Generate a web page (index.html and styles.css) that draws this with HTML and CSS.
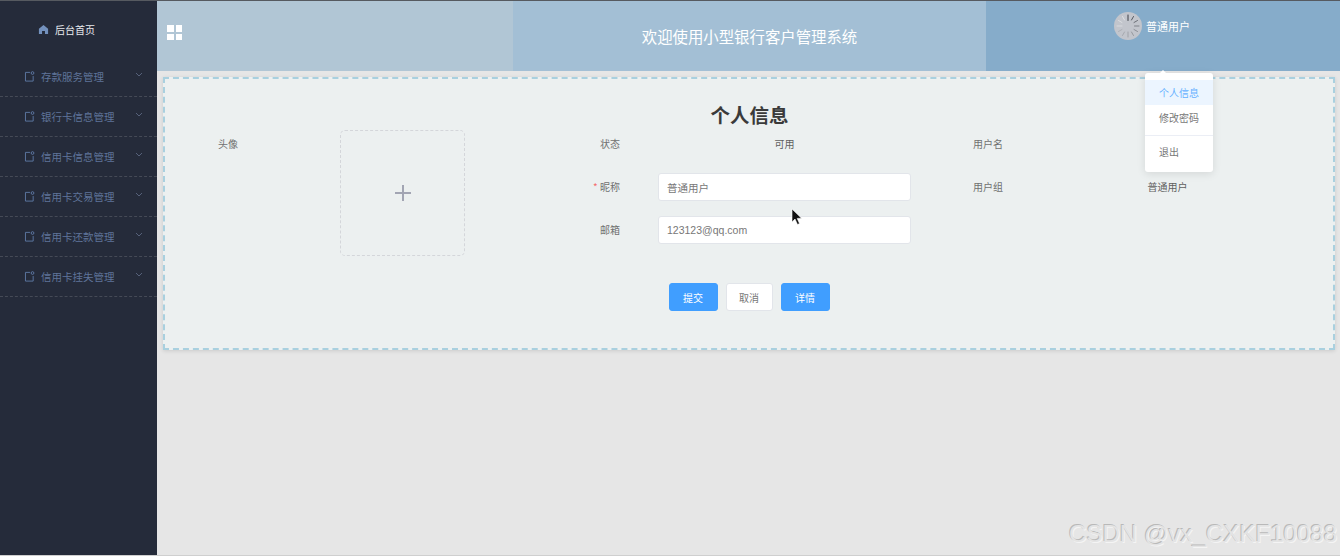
FILE: index.html
```html
<!DOCTYPE html>
<html>
<head>
    <title>个人信息</title>
    <link rel="stylesheet" href="styles.css">
</head>
<body>
    <div class="app">
        <aside class="sidebar">
            <div class="side-home">
                <svg class="home-icon" viewBox="0 0 12 12"><path d="M6 1 L11 5.2 V11 H7.6 V7.6 H4.4 V11 H1 V5.2 Z"/></svg>
                <span>后台首页</span>
            </div>
            <ul class="side-menu">
                <li class="side-item">
                    <svg class="item-icon" viewBox="0 0 12 12"><path d="M6.5 1.5 H1.6 V11 H10 V5.5"/><circle cx="9.3" cy="2.2" r="1.5"/></svg>
                    <span class="item-text">存款服务管理</span>
                    <svg class="item-arrow" viewBox="0 0 8 5"><path d="M1 1 L4 4 L7 1"/></svg>
                </li>
                <li class="side-item">
                    <svg class="item-icon" viewBox="0 0 12 12"><path d="M6.5 1.5 H1.6 V11 H10 V5.5"/><circle cx="9.3" cy="2.2" r="1.5"/></svg>
                    <span class="item-text">银行卡信息管理</span>
                    <svg class="item-arrow" viewBox="0 0 8 5"><path d="M1 1 L4 4 L7 1"/></svg>
                </li>
                <li class="side-item">
                    <svg class="item-icon" viewBox="0 0 12 12"><path d="M6.5 1.5 H1.6 V11 H10 V5.5"/><circle cx="9.3" cy="2.2" r="1.5"/></svg>
                    <span class="item-text">信用卡信息管理</span>
                    <svg class="item-arrow" viewBox="0 0 8 5"><path d="M1 1 L4 4 L7 1"/></svg>
                </li>
                <li class="side-item">
                    <svg class="item-icon" viewBox="0 0 12 12"><path d="M6.5 1.5 H1.6 V11 H10 V5.5"/><circle cx="9.3" cy="2.2" r="1.5"/></svg>
                    <span class="item-text">信用卡交易管理</span>
                    <svg class="item-arrow" viewBox="0 0 8 5"><path d="M1 1 L4 4 L7 1"/></svg>
                </li>
                <li class="side-item">
                    <svg class="item-icon" viewBox="0 0 12 12"><path d="M6.5 1.5 H1.6 V11 H10 V5.5"/><circle cx="9.3" cy="2.2" r="1.5"/></svg>
                    <span class="item-text">信用卡还款管理</span>
                    <svg class="item-arrow" viewBox="0 0 8 5"><path d="M1 1 L4 4 L7 1"/></svg>
                </li>
                <li class="side-item">
                    <svg class="item-icon" viewBox="0 0 12 12"><path d="M6.5 1.5 H1.6 V11 H10 V5.5"/><circle cx="9.3" cy="2.2" r="1.5"/></svg>
                    <span class="item-text">信用卡挂失管理</span>
                    <svg class="item-arrow" viewBox="0 0 8 5"><path d="M1 1 L4 4 L7 1"/></svg>
                </li>
            </ul>
        </aside>

        <div class="content">
            <header class="topbar">
                <div class="top-left">
                    <div class="grid-icon"><i></i><i></i><i></i><i></i></div>
                </div>
                <div class="top-title">欢迎使用小型银行客户管理系统</div>
                <div class="top-user">
                    <svg class="avatar" viewBox="0 0 28 28">
                        <circle cx="14" cy="14" r="14" fill="#c2c5cc"/>
                        <g stroke-width="1" stroke-linecap="round">
                            <line x1="14" y1="3" x2="14" y2="8.5" stroke="#3c3f46"/>
                            <line x1="19.5" y1="4.5" x2="17.5" y2="8" stroke="#55585f"/>
                            <line x1="23.5" y1="8.5" x2="20" y2="10.5" stroke="#6c6f76"/>
                            <line x1="25" y1="14" x2="20.5" y2="14" stroke="#7f8289"/>
                            <line x1="23.5" y1="19.5" x2="20" y2="17.5" stroke="#8c8f96"/>
                            <line x1="19.5" y1="23.5" x2="17.5" y2="20" stroke="#96999f"/>
                            <line x1="14" y1="25" x2="14" y2="20" stroke="#9fa2a8"/>
                            <line x1="8.5" y1="23.5" x2="10.5" y2="20" stroke="#a6a9af"/>
                            <line x1="4.5" y1="19.5" x2="8" y2="17.5" stroke="#adb0b6"/>
                            <line x1="3" y1="14" x2="8" y2="14" stroke="#d8dade"/>
                            <line x1="4.5" y1="8.5" x2="8" y2="10.5" stroke="#dcdee1"/>
                            <line x1="8.5" y1="4.5" x2="10.5" y2="8" stroke="#e0e2e5"/>
                        </g>
                    </svg>
                    <span class="user-name">普通用户</span>
                </div>
            </header>

            <main class="main">
                <section class="card">
                    <h2 class="card-title">个人信息</h2>
                    <form class="info-form">
                        <div class="form-item avatar-item">
                            <label>头像</label>
                            <div class="form-value">
                                <div class="upload-box"><span class="plus"></span></div>
                            </div>
                        </div>
                        <div class="form-item">
                            <label>状态</label>
                            <div class="form-value plain">可用</div>
                        </div>
                        <div class="form-item">
                            <label>用户名</label>
                            <div class="form-value plain"></div>
                        </div>
                        <div class="form-item">
                            <label><em>*</em> 昵称</label>
                            <div class="form-value"><input type="text" value="普通用户"></div>
                        </div>
                        <div class="form-item">
                            <label>用户组</label>
                            <div class="form-value plain">普通用户</div>
                        </div>
                        <div class="form-item">
                            <label>邮箱</label>
                            <div class="form-value"><input type="text" value="123123@qq.com"></div>
                        </div>
                    </form>
                    <div class="form-btns">
                        <button type="button" class="btn primary">提交</button>
                        <button type="button" class="btn">取消</button>
                        <button type="button" class="btn primary">详情</button>
                    </div>
                </section>
            </main>
        </div>

        <div class="dropdown">
            <div class="dropdown-item active">个人信息</div>
            <div class="dropdown-item">修改密码</div>
            <div class="dropdown-item divided">退出</div>
        </div>

        <svg class="cursor" viewBox="0 0 12 18"><path d="M1 1 V14 L4 11 L6.5 16.5 L8.5 15.5 L6.2 10.4 L10.5 10.2 Z"/></svg>
        <div class="watermark">CSDN @vx_CXKF10088</div>
    </div>
</body>
</html>
```

FILE: styles.css
```css
* { box-sizing: border-box; }
html, body { margin: 0; height: 100%; overflow: hidden; }
body { font-family: "Noto Sans CJK SC", "Liberation Sans", sans-serif; font-size: 10px; color: #606266; }

.app { position: relative; display: flex; height: 556px; background: #e6e6e6; border-top: 1px solid #565a60; border-bottom: 1px solid #cfcfcf; }

/* sidebar */
.sidebar { width: 157px; flex: none; background: #252b3a; }
.side-home { display: flex; align-items: center; height: 56px; padding-left: 38px; color: #e8eaee; }
.home-icon { width: 11px; height: 11px; margin-right: 6px; fill: #7391bd; }
.side-menu { list-style: none; margin: 0; padding: 0; }
.side-item { display: flex; align-items: center; height: 40px; padding-left: 24px; border-bottom: 1px dashed #454a56; color: #5f7499; font-size: 10.5px; }
.item-icon { width: 11px; height: 11px; margin-right: 6px; fill: none; stroke: #5f7ba6; stroke-width: 1; }
.item-text { flex: 1; }
.item-arrow { width: 8px; height: 5px; margin-right: 14px; margin-top: -4px; fill: none; stroke: #56617a; stroke-width: 1; }

/* top bar */
.content { flex: 1; min-width: 0; }
.topbar { display: flex; height: 70px; color: #fff; }
.top-left { width: 356px; background: #b1c6d5; padding: 24px 0 0 10px; }
.grid-icon { display: grid; grid-template-columns: 6.5px 6.5px; grid-auto-rows: 6.5px; gap: 2px; }
.grid-icon i { background: #fff; }
.top-title { width: 473px; background: #a3bfd5; text-align: center; font-size: 15.4px; line-height: 70px; }
.top-user { flex: 1; display: flex; align-items: flex-start; background: #86acca; padding: 11px 0 0 128px; }
.avatar { width: 28px; height: 28px; }
.user-name { margin-left: 4px; font-size: 11px; line-height: 28px; }

/* form card */
.main { padding: 6px 5px 0 6px; }
.card { height: 273px; padding: 21px 0 0 11px; background: #ecf0f0; border: 2px dashed #a9d0df; box-shadow: 0 1px 4px rgba(0, 0, 0, 0.12); }
.card-title { margin: 0; height: 30px; line-height: 30px; padding-right: 10px; text-align: center; font-size: 19.5px; font-weight: 700; color: #3a3a3a; }
.info-form { display: grid; grid-template-columns: 382px 383px 382px; grid-template-rows: 28px 28px 40px; gap: 15px 0; }
.form-item { display: flex; align-items: flex-start; line-height: 28px; }
.form-item label { width: 62px; flex: none; text-align: right; color: #707070; }
.form-item label em { color: #f56c6c; font-style: normal; }
.form-value { width: 253px; margin-left: 38px; }
.form-value.plain { text-align: center; color: #606060; }
.form-value input { display: block; width: 100%; height: 28px; padding: 0 8px; border: 1px solid #e2e5ea; border-radius: 3px; background: #fff; color: #777; font-family: "Liberation Sans", "Noto Sans CJK SC", sans-serif; font-size: 10.5px; }
.avatar-item { grid-row: 1 / 4; }
.upload-box { display: flex; align-items: center; justify-content: center; width: 125px; height: 126px; margin: 0 auto; border: 1px dashed #d4d6da; border-radius: 5px; }
.plus { position: relative; width: 16px; height: 16px; }
.plus::before, .plus::after { content: ""; position: absolute; background: #a2a5b3; }
.plus::before { left: 0; right: 0; top: 7px; height: 2px; }
.plus::after { top: 0; bottom: 0; left: 7px; width: 2px; }

.form-btns { display: flex; justify-content: center; gap: 8px; margin-top: 27px; padding-right: 11px; }
.btn { width: 47px; height: 28px; padding: 0; border: 1px solid #e2e5ea; border-radius: 3px; background: #fff; color: #777; font-family: inherit; font-size: 10px; }
.btn.primary { width: 49px; background: #409eff; border-color: #409eff; color: #fff; }

/* user menu */
.dropdown { position: absolute; left: 1145px; top: 72px; width: 68px; height: 99px; padding: 7px 0; background: #fff; border-radius: 3px; box-shadow: 0 2px 8px rgba(0, 0, 0, 0.1); }
.dropdown::before { content: ""; position: absolute; left: 15px; top: -3px; border: 3px solid transparent; border-top: 0; border-bottom-color: #fff; }
.dropdown-item { height: 25px; line-height: 25px; padding-left: 14px; color: #777; }
.dropdown-item.active { background: #ecf5ff; color: #66b1ff; }
.dropdown-item.divided { margin-top: 5px; height: 33px; line-height: 32px; border-top: 1px solid #ebeef5; }

/* overlays */
.cursor { position: absolute; left: 791px; top: 207px; width: 12px; height: 18px; fill: #111; stroke: #fff; stroke-width: 0.6; }
.watermark { position: absolute; left: 1069px; top: 517px; font-family: "Liberation Sans", sans-serif; font-size: 24.1px; line-height: 32px; white-space: nowrap; color: #e4e4e4; text-shadow: -1px -1px 0 #b9b9b9, 1px 1px 0 #f4f4f4; }
```
